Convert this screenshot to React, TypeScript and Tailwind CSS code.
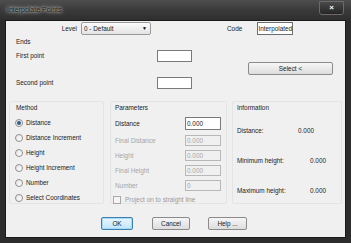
import React from "react";

const Radio = ({ checked }: { checked?: boolean }) => (
  <span className="w-[8px] h-[8px] rounded-full border border-[#8e8f8f] bg-gradient-to-br from-[#e6e6e6] to-[#ffffff] flex items-center justify-center shrink-0">
    {checked && <span className="w-[4px] h-[4px] rounded-full bg-[#2f5f8f]" />}
  </span>
);

const Btn = ({ children, w, cls = "" }: { children: React.ReactNode; w: string; cls?: string }) => (
  <div className={`${w} h-[13px] rounded-[2px] border flex items-center justify-center ${cls}`}>
    {children}
  </div>
);

export default function App() {
  const methods = ["Distance", "Distance Increment", "Height", "Height Increment", "Number", "Select Coordinates"];
  return (
    <div
      className="w-[351px] h-[243px] bg-[#2d2d2d] flex flex-col overflow-hidden text-[6.4px] text-[#222]"
      style={{ fontFamily: '"Liberation Sans", Arial, sans-serif' }}
    >
      {/* title bar */}
      <div className="h-[20px] flex items-start bg-gradient-to-b from-[#4e4e4e] via-[#3a3a3a] to-[#2f2f2f]">
        <div className="pl-[7px] pt-[5px] text-[7px] text-[#1b1b1b] [text-shadow:0_0_3px_#e8e8e8,0_0_5px_#d0d0d0]">
          Interpolate Points
        </div>
        <div className="ml-auto mr-[7px] mt-[1px] w-[25px] h-[14px] rounded-b-[3px] border border-[#6a6a6a] bg-gradient-to-b from-[#4a4a4a] to-[#262626] flex items-center justify-center text-white text-[8px] font-bold leading-none">
          ×
        </div>
      </div>

      {/* client area */}
      <div className="mx-[5px] h-[218px] border border-[#1a1a1a] bg-[#f0f0f0] flex flex-col">
        <div className="flex-1 flex flex-col pt-[1px]">
          {/* Level / Code row */}
          <div className="h-[13px] flex items-center">
            <div className="w-[72px] text-right pr-[1px]">Level</div>
            <div className="ml-[3px] w-[70px] h-[13px] border border-[#9a9a9a] rounded-[2px] bg-gradient-to-b from-[#fbfbfb] to-[#e4e4e4] flex items-center pl-[2px] pr-[3px]">
              <span>0 - Default</span>
              <span className="ml-auto text-[5px] text-black">▼</span>
            </div>
            <div className="ml-[76px]">Code</div>
            <div className="ml-[15px] w-[36px] h-[13px] border border-[#6d6d6d] bg-white flex items-center justify-center">
              Interpolated
            </div>
          </div>

          {/* Ends */}
          <div className="mt-[3px] h-[8px] leading-[8px] pl-[10px]">Ends</div>

          <div className="flex">
            <div className="flex flex-col w-[186px]">
              <div className="mt-[4px] h-[12px] flex items-center">
                <div className="pl-[10px] w-[151px]">First point</div>
                <div className="w-[35px] h-[12px] border border-[#7a7a7a] bg-white" />
              </div>
              <div className="mt-[15px] h-[12px] flex items-center">
                <div className="pl-[10px] w-[151px]">Second point</div>
                <div className="w-[35px] h-[12px] border border-[#7a7a7a] bg-white" />
              </div>
            </div>
            <div className="ml-[56px] mt-[16px]">
              <Btn w="w-[85px]" cls="h-[12px] border-[#8a8a8a] bg-gradient-to-b from-[#f6f6f6] to-[#dddddd]">
                Select &lt;
              </Btn>
            </div>
          </div>

          {/* groups */}
          <div className="mt-[12px] h-[103px] flex pl-[3px]">
            {/* Method */}
            <div className="w-[95px] h-full border border-[#e4e4e4] rounded-[2px] flex flex-col">
              <div className="pl-[6px] mt-[2px] h-[8px] leading-[8px]">Method</div>
              <div className="flex flex-col mt-[7px] gap-[7px] pl-[5px]">
                {methods.map((m, i) => (
                  <div key={m} className="h-[8px] flex items-center gap-[2px]">
                    <Radio checked={i === 0} />
                    <span className="ml-[1px]">{m}</span>
                  </div>
                ))}
              </div>
            </div>

            {/* Parameters */}
            <div className="ml-[6px] w-[117px] h-full border border-[#e4e4e4] rounded-[2px] flex flex-col">
              <div className="pl-[4px] mt-[2px] h-[8px] leading-[8px]">Parameters</div>
              <div className="mt-[5px] h-[13px] flex items-center">
                <div className="pl-[4px] w-[74px]">Distance</div>
                <div className="w-[36px] h-[13px] border border-[#7a7a7a] bg-white flex items-center pl-[1px]">0.000</div>
              </div>
              {["Final Distance", "Height", "Final Height", "Number"].map((l, i) => (
                <div key={l} className={`${i === 0 ? "mt-[5px]" : "mt-[4px]"} h-[11px] flex items-center text-[#a6a6a6]`}>
                  <div className="pl-[4px] w-[74px]">{l}</div>
                  <div className="w-[36px] h-[11px] border border-[#b8b8b8] bg-[#f0f0f0] flex items-center pl-[1px]">
                    {l === "Number" ? "0" : "0.000"}
                  </div>
                </div>
              ))}
              <div className="mt-[4px] h-[9px] flex items-center text-[#9a9a9a] pl-[2px]">
                <span className="w-[8px] h-[8px] border border-[#a9a9a9] bg-[#f4f4f4]" />
                <span className="ml-[4px]">Project on to straight line</span>
              </div>
            </div>

            {/* Information */}
            <div className="ml-[5px] w-[110px] h-full border border-[#e4e4e4] rounded-[2px] flex flex-col">
              <div className="pl-[4px] mt-[2px] h-[8px] leading-[8px]">Information</div>
              <div className="mt-[15px] h-[8px] flex items-center">
                <div className="pl-[4px] w-[65px]">Distance:</div>
                <div>0.000</div>
              </div>
              <div className="mt-[22px] h-[8px] flex items-center">
                <div className="pl-[4px] w-[77px]">Minimum height:</div>
                <div>0.000</div>
              </div>
              <div className="mt-[22px] h-[8px] flex items-center">
                <div className="pl-[4px] w-[77px]">Maximum height:</div>
                <div>0.000</div>
              </div>
            </div>
          </div>

          {/* buttons */}
          <div className="mt-[13px] flex pl-[95px]">
            <Btn w="w-[32px]" cls="border-[#3c7fb1] bg-gradient-to-b from-[#eaf6fd] to-[#bee6fd] shadow-[inset_0_0_0_1px_#a7d9f5]">
              OK
            </Btn>
            <Btn w="w-[38px] ml-[19px]" cls="border-[#8a8a8a] bg-gradient-to-b from-[#f6f6f6] to-[#dddddd]">
              Cancel
            </Btn>
            <Btn w="w-[39px] ml-[18px]" cls="border-[#8a8a8a] bg-gradient-to-b from-[#f6f6f6] to-[#dddddd]">
              Help ...
            </Btn>
          </div>
        </div>
      </div>
    </div>
  );
}
